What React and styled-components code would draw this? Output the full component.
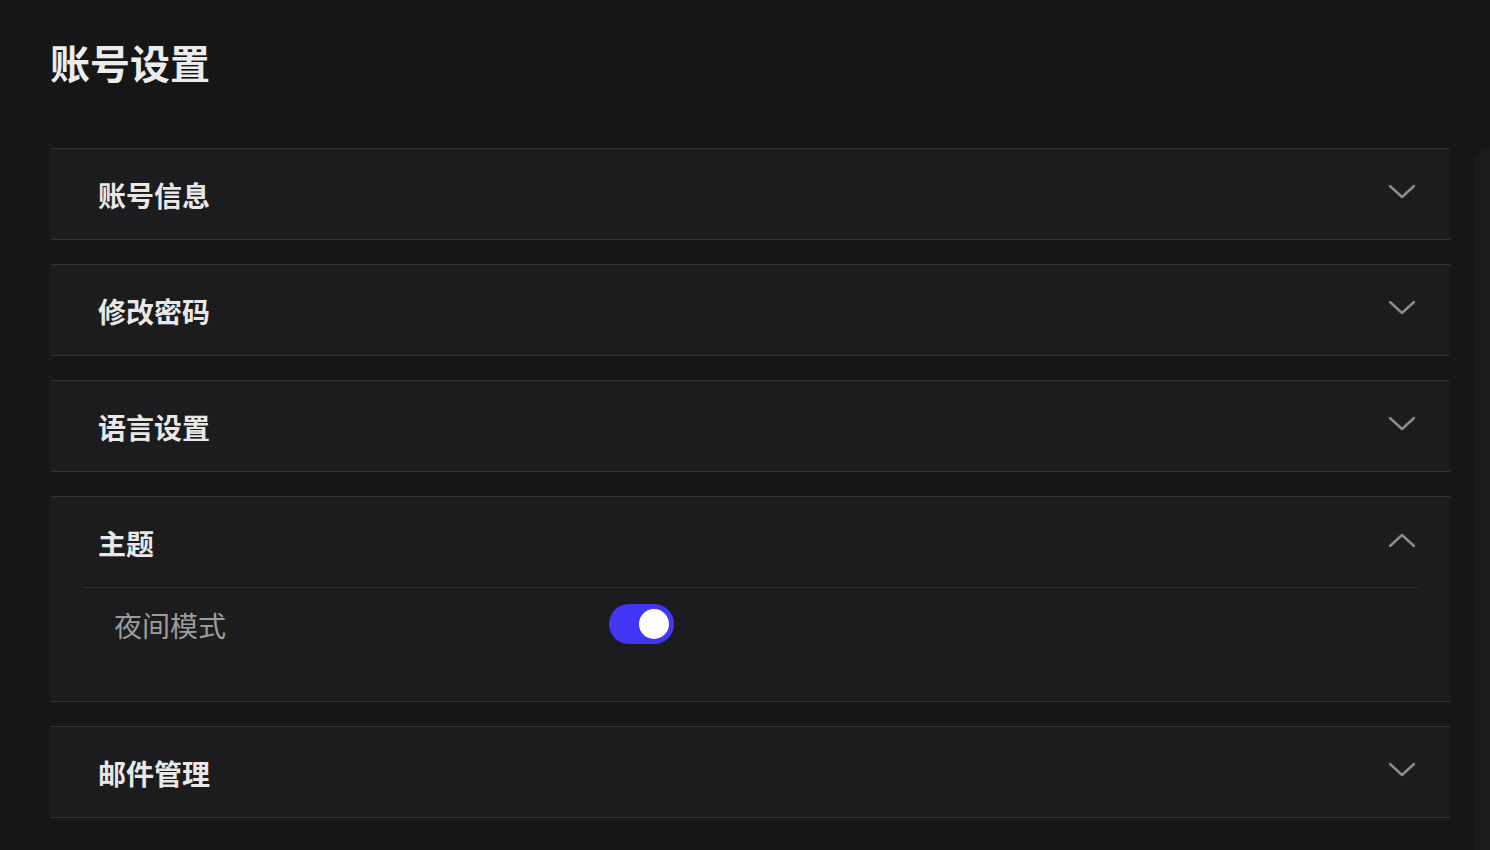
import React, { useState } from 'react';
import styled, { createGlobalStyle } from 'styled-components';

const GlobalStyle = createGlobalStyle`
    html, body {
        margin: 0;
        padding: 0;
        background: #161617;
        overflow: hidden;
    }
    body {
        font-family: "Noto Sans CJK SC", "Noto Sans", sans-serif;
    }
`;

const sections = [
    { id: 'info', title: '账号信息' },
    { id: 'password', title: '修改密码' },
    { id: 'lang', title: '语言设置' },
    { id: 'theme', title: '主题' },
    { id: 'mail', title: '邮件管理' },
];

const Chevron = ({ up }) => (
    <svg width="28" height="16" viewBox="0 0 28 16" fill="none">
        <path
            d={up ? 'M2 14 L14 3 L26 14' : 'M2 2 L14 13 L26 2'}
            stroke="#8c8c8e"
            strokeWidth="2.4"
            strokeLinecap="round"
            strokeLinejoin="round"
        />
    </svg>
);

export default function App() {
    const [open, setOpen] = useState('theme');
    const [night, setNight] = useState(true);

    return (
        <Page>
            <GlobalStyle />
            <Main>
                <Title>账号设置</Title>
                <List>
                    {sections.map(s => (
                        <Item key={s.id}>
                            <Header onClick={() => setOpen(open === s.id ? null : s.id)}>
                                <ItemTitle>{s.title}</ItemTitle>
                                <ChevronWrap>
                                    <Chevron up={open === s.id} />
                                </ChevronWrap>
                            </Header>
                            {open === s.id && s.id === 'theme' && (
                                <Body>
                                    <Row>
                                        <Label>夜间模式</Label>
                                        <Toggle $on={night} onClick={() => setNight(!night)}>
                                            <Knob $on={night} />
                                        </Toggle>
                                    </Row>
                                </Body>
                            )}
                        </Item>
                    ))}
                </List>
            </Main>
            <SidePanel />
        </Page>
    );
}

const Page = styled.div`
    display: flex;
    width: 1490px;
    height: 850px;
    overflow: hidden;
    box-sizing: border-box;
    padding-left: 50px;
`;

const Main = styled.div`
    width: 1400px;
    flex-shrink: 0;
`;

const Title = styled.h1`
    margin: 0;
    padding-top: 34px;
    height: 148px;
    box-sizing: border-box;
    font-size: 40px;
    line-height: 56px;
    font-weight: 700;
    color: #ececec;
`;

const List = styled.div`
    display: flex;
    flex-direction: column;
    gap: 24px;
`;

const Item = styled.div`
    background: #1c1c1e;
    border-top: 1px solid #313133;
    border-bottom: 1px solid #313133;
`;

const Header = styled.div`
    height: 90px;
    display: flex;
    align-items: center;
    justify-content: space-between;
    padding: 0 34px 0 48px;
    cursor: pointer;
`;

const ItemTitle = styled.span`
    font-size: 28px;
    font-weight: 700;
    color: #e8e8e8;
    margin-top: 2px;
`;

const ChevronWrap = styled.span`
    display: flex;
    margin-top: -5px;
`;

const Body = styled.div`
    margin: 0 32px;
    border-top: 1px solid #2e2e30;
    padding: 16px 32px 57px;
`;

const Row = styled.div`
    display: flex;
    align-items: center;
    height: 40px;
`;

const Label = styled.span`
    width: 495px;
    font-size: 28px;
    color: #9c9c9c;
    margin-top: 2px;
`;

const Toggle = styled.button`
    position: relative;
    width: 65px;
    height: 40px;
    border: none;
    border-radius: 20px;
    padding: 0;
    background: ${p => (p.$on ? '#4136f5' : '#444')};
    cursor: pointer;
`;

const Knob = styled.span`
    position: absolute;
    top: 5px;
    left: ${p => (p.$on ? '30px' : '5px')};
    width: 30px;
    height: 30px;
    border-radius: 50%;
    background: #ffffff;
`;

const SidePanel = styled.div`
    margin-left: 24px;
    margin-top: 148px;
    width: 300px;
    flex-shrink: 0;
    background: #1b1b1d;
    border-radius: 18px 0 0 0;
`;
